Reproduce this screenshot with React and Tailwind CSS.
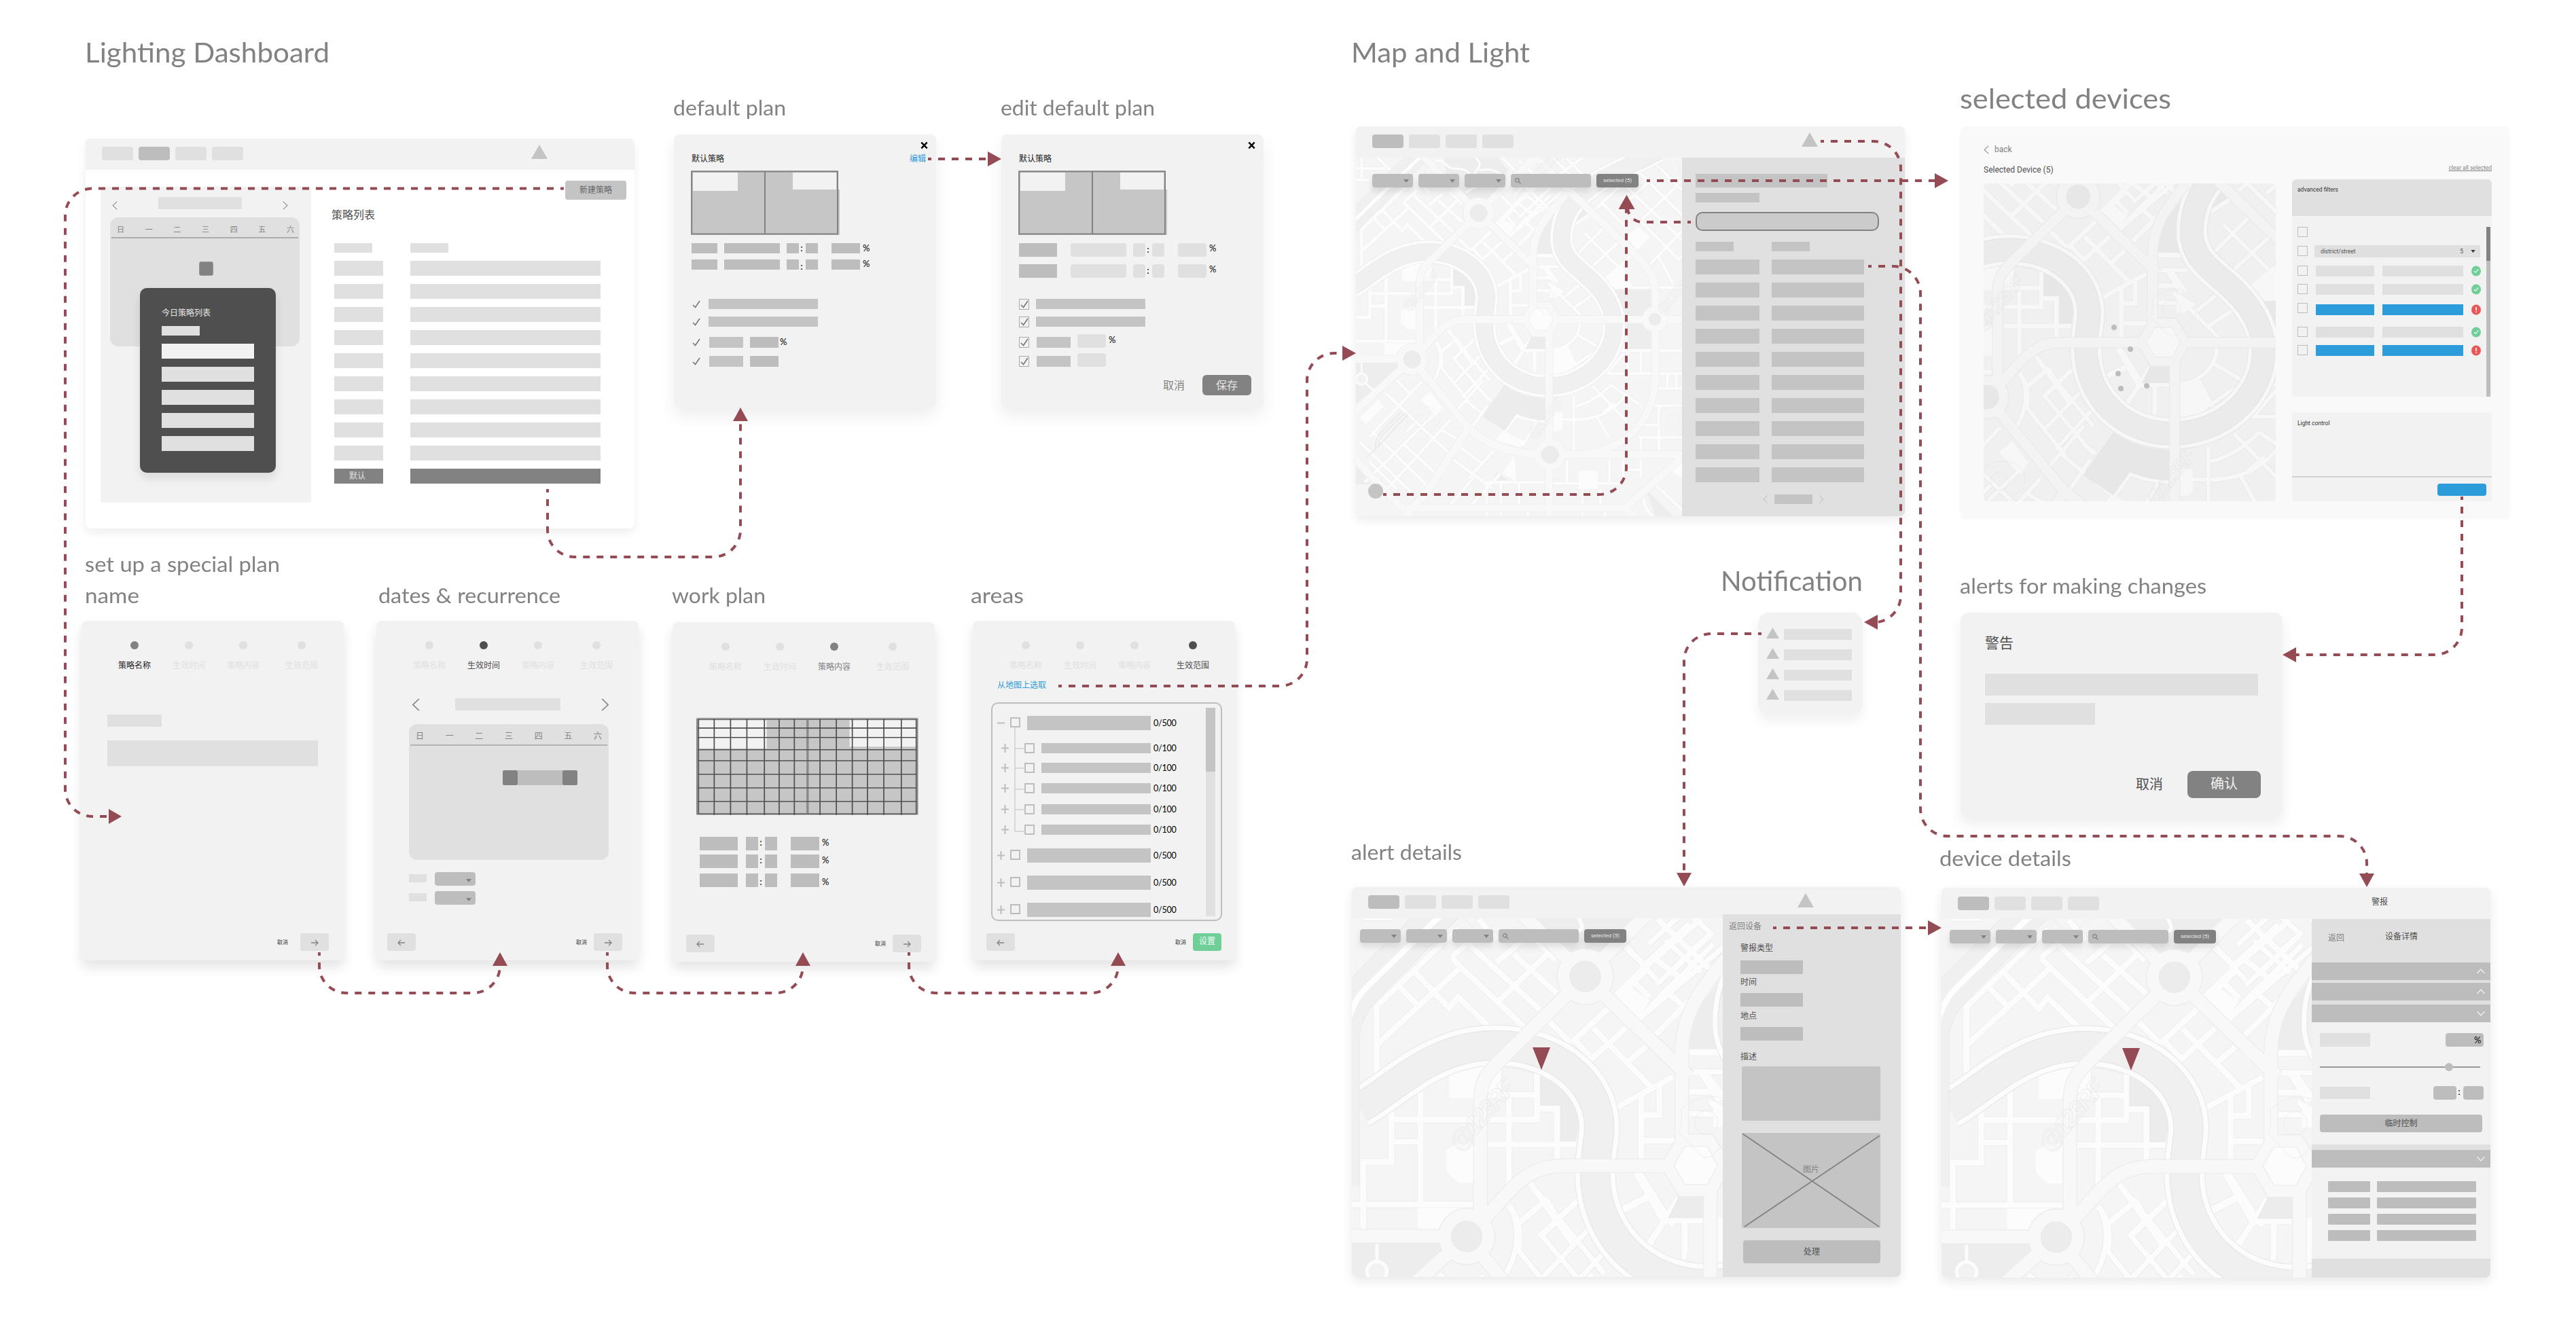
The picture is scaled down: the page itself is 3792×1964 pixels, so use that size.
import { useLayoutEffect, useRef } from "react";

const CJK = "font-['Noto_Sans','Noto_Sans_CJK_SC',sans-serif]";

/* Keeps a title at a fixed width by scaling its glyphs horizontally. */
function Fit({ width, className, children }) {
  const ref = useRef(null);
  useLayoutEffect(() => {
    const el = ref.current;
    const fit = () => {
      el.style.transform = "none";
      el.style.transform = `scaleX(${width / el.getBoundingClientRect().width})`;
    };
    fit();
    document.fonts?.ready.then(fit);
  }, [width]);
  return (
    <span ref={ref} className={`inline-block origin-left whitespace-nowrap ${className || ""}`}>
      {children}
    </span>
  );
}

const titles = [
  ["Lighting Dashboard", 360, "left-[125px] top-[52px] text-[41px]"],
  ["default plan", 166, "left-[991px] top-[140px] text-[31px]"],
  ["edit default plan", 227, "left-[1473px] top-[140px] text-[31px]"],
  ["set up a special plan", 287, "left-[125px] top-[812px] text-[31px]"],
  ["name", 80, "left-[125px] top-[858px] text-[31px]"],
  ["dates & recurrence", 268, "left-[557px] top-[858px] text-[31px]"],
  ["work plan", 138, "left-[989px] top-[858px] text-[31px]"],
  ["areas", 78, "left-[1429px] top-[858px] text-[31px]"],
  ["Map and Light", 263, "left-[1989px] top-[52px] text-[41px]"],
  ["selected devices", 311, "left-[2885px] top-[120px] text-[41px]"],
  ["Notification", 209, "left-[2533px] top-[830px] text-[41px]"],
  ["alerts for making changes", 363, "left-[2885px] top-[844px] text-[31px]"],
  ["alert details", 163, "left-[1989px] top-[1236px] text-[31px]"],
  ["device details", 194, "left-[2855px] top-[1245px] text-[31px]"],
];

function Triangle({ className }) {
  return (
    <svg viewBox="0 0 24 21" preserveAspectRatio="none" className={className}>
      <path d="M12 0 24 21H0Z" fill="#c4c4c4" />
    </svg>
  );
}

function Chevron({ d = "left", className }) {
  const paths = { left: "M9 1 1.5 9 9 17", right: "M1 1 8.5 9 1 17" };
  return (
    <svg viewBox="0 0 10 18" preserveAspectRatio="none" fill="none" stroke="currentColor" strokeWidth="1.4" className={className}>
      <path d={paths[d]} />
    </svg>
  );
}

function Caret({ className }) {
  return (
    <svg viewBox="0 0 8 5" className={className}>
      <path d="M0 0H8L4 5Z" fill="currentColor" />
    </svg>
  );
}

function Tabs({ active }) {
  return (
    <div className="flex gap-2">
      {[0, 1, 2, 3].map((i) => (
        <div key={i} className={`h-5 w-[46px] rounded ${i === active ? "bg-[#bdbdbd]" : "bg-[#e0e0e0]"}`} />
      ))}
    </div>
  );
}

function Weekdays({ className }) {
  return (
    <div className={`flex items-center justify-between leading-none text-[#828282] ${className}`}>
      {["日", "一", "二", "三", "四", "五", "六"].map((d) => (
        <span key={d}>{d}</span>
      ))}
    </div>
  );
}

/* ---------- dashboard ---------- */

function Dashboard() {
  return (
    <section className="absolute left-[126px] top-[204px] h-[574px] w-[808px] overflow-visible rounded-lg bg-white shadow-[0_6px_14px_rgba(0,0,0,0.07)]">
      <header className="flex h-[46px] items-start justify-between rounded-t-lg bg-[#f2f2f2] pl-6 pr-[128px] pt-3">
        <Tabs active={1} />
        <Triangle className="-mt-[3px] h-[21px] w-6" />
      </header>
      <div className="flex">
        <aside className="relative ml-[22px] mt-[25px] h-[465px] w-[310px] rounded bg-[#f2f2f2]">
          <div className="flex h-[45px] items-start justify-between px-[17px] pt-[15px] text-[#828282]">
            <Chevron className="mt-[6px] h-[13px] w-2" />
            <div className="h-[18px] w-[123px] bg-[#e0e0e0]" />
            <Chevron d="right" className="mr-[17px] mt-[6px] h-[13px] w-2" />
          </div>
          <div className="ml-[14px] flex h-[190px] w-[279px] flex-col items-center rounded-xl bg-[#e0e0e0]">
            <Weekdays className="h-[29px] w-full pl-[10px] pr-2 pt-[5px] text-[11px]" />
            <div className="h-[2px] w-[275px] bg-[#acacac]" />
            <div className="ml-[3px] mt-[34px] h-[21px] w-[21px] rounded-[3px] border border-[#999] bg-[#828282]" />
          </div>
          <div className="absolute left-[58px] top-[149px] flex h-[272px] w-[200px] flex-col rounded-[10px] bg-[#4f4f4f] px-8 pt-[30px] shadow-[0_8px_14px_rgba(0,0,0,0.1)]">
            <span className="h-[26px] text-xs leading-[14px] text-[#e6e6e6]">今日策略列表</span>
            <div className="h-[14px] w-14 bg-[#e0e0e0]" />
            <div className="mt-3 flex flex-col gap-3">
              {[0, 1, 2, 3, 4].map((i) => (
                <div key={i} className={`h-[22px] w-[136px] ${i ? "bg-[#e0e0e0]" : "bg-[#f2f2f2]"}`} />
              ))}
            </div>
          </div>
        </aside>
        <main className="flex flex-1 flex-col">
          <button className="mr-3 mt-4 h-7 w-[90px] self-end rounded bg-[#c4c4c4] text-xs text-[#666]">新建策略</button>
          <h2 className="ml-[30px] mt-[10px] h-6 text-base leading-6 text-[#4f4f4f]">策略列表</h2>
          <div className="ml-[34px] mt-[30px] grid grid-cols-[112px_280px] gap-y-3">
            <div className="h-[14px] w-14 bg-[#e0e0e0]" />
            <div className="h-[14px] w-14 bg-[#e0e0e0]" />
            {Array.from({ length: 9 }, (_, i) => [
              <div key={`a${i}`} className="h-[22px] w-[72px] bg-[#e0e0e0]" />,
              <div key={`b${i}`} className="h-[22px] bg-[#e0e0e0]" />,
            ])}
            <div className="flex h-[22px] w-[72px] items-center justify-center bg-[#828282] pr-1 text-xs text-[#e0e0e0]">默认</div>
            <div className="h-[22px] bg-[#828282]" />
          </div>
        </main>
      </div>
    </section>
  );
}

/* ---------- default plan ---------- */

function PlanChart() {
  return (
    <svg viewBox="0 0 219 95" className="block h-[95px] w-[219px]">
      <rect x="0" y="28" width="219" height="67" fill="#c6c6c6" />
      <rect x="0" y="0" width="217" height="40" fill="#c6c6c6" />
      <path d="M3 3H69V30H3ZM150 3H214V28H150Z" fill="#f2f2f2" />
      <path d="M109 2V93M1.2 1.5H216V93.5H1.2Z" fill="none" stroke="#828282" strokeWidth="2" />
    </svg>
  );
}

function Check({ boxed }) {
  return (
    <span className={boxed ? "flex h-4 w-[15px] items-center justify-center border border-[#aaa]" : "flex h-4 w-[14px] items-center"}>
      <svg viewBox="0 0 12 12" className="h-3 w-3">
        <path d="M1 7 4.5 10.5 11 1" fill="none" stroke="#777" strokeWidth="1.6" />
      </svg>
    </span>
  );
}

const Pct = ({ className = "" }) => (
  <span className={`w-[14px] font-[Lato,sans-serif] text-[13px] leading-none text-black ${className}`}>%</span>
);
const Colon = ({ className = "" }) => (
  <span className={`w-[10px] pr-[2px] text-center font-[Lato,sans-serif] text-[14px] leading-none text-black ${className}`}>:</span>
);

function PlanHead({ edit }) {
  return (
    <>
      <div className="flex h-[28px] justify-end pr-3 pt-[10px]">
        <svg viewBox="0 0 10 10" className="h-3 w-[11px]">
          <path d="M1.2 1 8.8 9M8.8 1 1.2 9" stroke="#000" strokeWidth="2.1" />
        </svg>
      </div>
      <div className="flex h-[25px] justify-between pl-[26px] pr-[15px] text-xs leading-4">
        <span className="text-[#222]">默认策略</span>
        {edit && <span className="text-[#2d9cdb]">编辑</span>}
      </div>
      <div className="ml-[25px]">
        <PlanChart />
      </div>
    </>
  );
}

function DefaultPlan() {
  return (
    <section className="absolute left-[992px] top-[198px] h-[402px] w-[386px] rounded-lg bg-[#f2f2f2] shadow-[0_12px_24px_rgba(0,0,0,0.07)]">
      <PlanHead edit />
      <div className="ml-[26px] mt-3 flex flex-col gap-[9px]">
        {[0, 1].map((i) => (
          <div key={i} className="flex h-[15px] items-center">
            <div className="h-full w-[38px] bg-[#bdbdbd]" />
            <div className="ml-[10px] h-full w-[82px] bg-[#bdbdbd]" />
            <div className="ml-[10px] h-full w-[18px] bg-[#bdbdbd]" />
            <Colon className={i ? "mt-1" : "-mt-px"} />
            <div className="h-full w-[18px] bg-[#bdbdbd]" />
            <div className="ml-5 mr-1 h-full w-[42px] bg-[#bdbdbd]" />
            <Pct className={i ? "-mt-[3px]" : ""} />
          </div>
        ))}
      </div>
      <div className="ml-[27px] mt-[43px] flex flex-col">
        <div className="flex h-[26px] gap-[10px]"><Check /><div className="h-[15px] w-[161px] bg-[#c4c4c4]" /></div>
        <div className="flex h-[30px] gap-[10px]"><Check /><div className="h-[15px] w-[161px] bg-[#c4c4c4]" /></div>
        <div className="flex h-[28px]"><Check /><div className="ml-[11px] h-4 w-[50px] bg-[#c4c4c4]" /><div className="ml-[10px] mr-[2px] h-4 w-[42px] bg-[#bdbdbd]" /><Pct className="mt-px" /></div>
        <div className="flex h-[28px]"><Check /><div className="ml-[11px] h-4 w-[50px] bg-[#c4c4c4]" /><div className="ml-[10px] h-4 w-[42px] bg-[#bdbdbd]" /></div>
      </div>
    </section>
  );
}

function EditPlan() {
  return (
    <section className="absolute left-[1474px] top-[198px] h-[402px] w-[386px] rounded-lg bg-[#f2f2f2] shadow-[0_12px_24px_rgba(0,0,0,0.07)]">
      <PlanHead />
      <div className="ml-[26px] mt-3 flex flex-col gap-[11px]">
        {[0, 1].map((i) => (
          <div key={i} className="flex h-5 items-center">
            <div className="h-5 w-14 bg-[#bdbdbd]" />
            <div className="ml-5 h-5 w-[82px] rounded bg-[#e0e0e0]" />
            <div className="ml-[10px] h-5 w-[18px] rounded bg-[#e0e0e0]" />
            <Colon className="-mt-[2px]" />
            <div className="h-5 w-[18px] rounded bg-[#e0e0e0]" />
            <div className="ml-5 mr-1 h-5 w-[42px] rounded bg-[#e0e0e0]" />
            <Pct className="-mt-[5px]" />
          </div>
        ))}
      </div>
      <div className="ml-[26px] mt-[31px] flex flex-col">
        <div className="flex h-[26px] gap-[10px]"><Check boxed /><div className="h-[15px] w-[161px] bg-[#c4c4c4]" /></div>
        <div className="flex h-[30px] gap-[10px]"><Check boxed /><div className="h-[15px] w-[161px] bg-[#c4c4c4]" /></div>
        <div className="flex h-[28px]"><Check boxed /><div className="ml-[11px] h-4 w-[50px] bg-[#c4c4c4]" /><div className="-mt-1 ml-[10px] mr-1 h-5 w-[42px] rounded bg-[#e0e0e0]" /><Pct className="-mt-[2px]" /></div>
        <div className="flex h-[28px]"><Check boxed /><div className="ml-[11px] h-4 w-[50px] bg-[#c4c4c4]" /><div className="-mt-1 ml-[10px] h-5 w-[42px] rounded bg-[#e0e0e0]" /></div>
      </div>
      <div className="mr-[18px] flex items-center justify-end gap-[26px] text-base leading-none">
        <span className="text-[#828282]">取消</span>
        <button className="h-[30px] w-[72px] rounded-md bg-[#828282] text-[#e6e6e6]">保存</button>
      </div>
    </section>
  );
}

/* ---------- special plan wizard ---------- */

const steps = ["策略名称", "生效时间", "策略内容", "生效范围"];
const stepPad = ["ml-[54px]", "ml-8", "ml-8", "ml-[38px]"];

function Steps({ active, dot, text }) {
  return (
    <div className="flex h-[74px] pt-[30px]">
      {steps.map((s, i) => (
        <div key={s} className={`flex w-12 flex-col items-center ${stepPad[i]}`}>
          <div className={`h-3 w-3 rounded-full ${i === active ? dot : "bg-[#e0e0e0]"}`} />
          <span className={`mt-4 whitespace-nowrap text-xs leading-4 ${i === active ? text : "text-[#e0e0e0]"}`}>{s}</span>
        </div>
      ))}
    </div>
  );
}

function ArrowButton({ left }) {
  return (
    <button className="flex h-[26px] w-[42px] items-center justify-center rounded bg-[#e0e0e0]">
      <svg viewBox="0 0 12 10" className={`mt-[2px] h-[10px] w-3 ${left ? "rotate-180" : ""}`} fill="none" stroke="#828282" strokeWidth="1.3">
        <path d="M1 5H11M7 1 11 5 7 9" />
      </svg>
    </button>
  );
}

function WizardCard({ place, active, dot, text, foot, children, next }) {
  return (
    <section className={`absolute flex h-[500px] w-[386px] flex-col rounded-lg bg-[#f2f2f2] shadow-[0_10px_18px_rgba(0,0,0,0.11)] ${place}`}>
      <Steps active={active} dot={dot} text={text} />
      <div className="flex-1">{children}</div>
      <footer className={`flex h-10 items-start ${foot}`}>
        {active > 0 && <ArrowButton left />}
        <span className="ml-auto mr-[10px] mt-[9px] text-[8px] leading-none text-[#333]">取消</span>
        {next || <ArrowButton />}
      </footer>
    </section>
  );
}

function NameStep() {
  return (
    <WizardCard place="left-[120px] top-[914px]" active={0} dot="bg-[#828282]" text="text-[#222]" foot="pl-4 pr-[22px] [&>span]:mr-[18px]">
      <div className="ml-[38px] pt-[64px]">
        <div className="h-[18px] w-20 bg-[#e0e0e0]" />
        <div className="mt-5 h-[38px] w-[310px] bg-[#e0e0e0]" />
      </div>
    </WizardCard>
  );
}

function DatesStep() {
  return (
    <WizardCard place="left-[554px] top-[914px]" active={1} dot="bg-[#4f4f4f]" text="text-[#4f4f4f]" foot="pl-4 pr-6">
      <div className="flex justify-between pl-[52px] pr-[43px] pt-10 text-[#828282]">
        <Chevron className="h-[19px] w-3" />
        <div className="mr-2 h-[18px] w-[155px] bg-[#e0e0e0]" />
        <Chevron d="right" className="h-[19px] w-3" />
      </div>
      <div className="ml-12 mt-[19px] flex h-[200px] w-[294px] flex-col items-center rounded-xl bg-[#e0e0e0]">
        <Weekdays className="h-[30px] w-full pl-[10px] pr-[10px] pt-[6px] text-xs" />
        <div className="h-[2px] w-[290px] bg-[#b4b4b4]" />
        <div className="ml-[138px] mt-9 flex h-[22px] w-[110px] justify-between self-start bg-[#bdbdbd]">
          <div className="w-[22px] rounded-[3px] bg-[#828282]" />
          <div className="w-[22px] rounded-[3px] bg-[#828282]" />
        </div>
      </div>
      <div className="ml-12 mt-[18px] flex flex-col gap-2">
        {[0, 1].map((i) => (
          <div key={i} className="flex items-start">
            <div className="mt-[3px] h-3 w-[26px] bg-[#e0e0e0]" />
            <div className="ml-3 flex h-5 w-[60px] items-center justify-end rounded bg-[#bdbdbd] pr-[6px] text-[#828282]">
              <Caret className="mt-1 h-[5px] w-2" />
            </div>
          </div>
        ))}
      </div>
    </WizardCard>
  );
}

function WorkGrid() {
  const xs = [160, 202, 244, 289, 327, 366, 432, 474, 515, 554, 596, 641];
  const ys = [568, 602, 646, 686, 735, 784, 833];
  return (
    <svg viewBox="114 529 571 353" preserveAspectRatio="none" className="block h-[144px] w-[327px]">
      <rect x="115" y="530" width="569" height="351" fill="#c6c6c6" />
      <path d="M120 540H295V641H120ZM508 540H678V635H508Z" fill="#f2f2f2" />
      <path d="M117 536H681V878H117ZM400 536V878" fill="none" stroke="#8a8a8a" strokeWidth="6" />
      <path d="M120 536H679V878H120Z" fill="none" stroke="#5b5b5b" strokeWidth="2.5" />
      {xs.map((x) => <path key={x} d={`M${x} 534V882`} stroke="#4f4f4f" strokeWidth="3" />)}
      {ys.map((y) => <path key={y} d={`M118 ${y}H680`} stroke="#4f4f4f" strokeWidth="4" />)}
    </svg>
  );
}

function WorkStep() {
  return (
    <WizardCard place="left-[990px] top-[916px]" active={2} dot="bg-[#828282]" text="text-[#828282]" foot="pl-5 pr-5">
      <div className="ml-[35px] pt-[66px]">
        <WorkGrid />
      </div>
      <div className="ml-10 mt-8 flex flex-col">
        {["mb-[6px]", "mb-2", ""].map((m, i) => (
          <div key={i} className={`flex h-5 items-center ${m}`}>
            <div className="h-5 w-14 bg-[#bdbdbd]" />
            <div className="ml-3 h-5 w-[18px] bg-[#bdbdbd]" />
            <Colon className={i === 2 ? "mt-1" : "-mt-1"} />
            <div className="h-5 w-[18px] bg-[#bdbdbd]" />
            <div className="ml-5 mr-1 h-5 w-[42px] bg-[#bdbdbd]" />
            <Pct className={i === 2 ? "mt-1" : "-mt-1"} />
          </div>
        ))}
      </div>
    </WizardCard>
  );
}

const PlusMinus = ({ minus }) => (
  <svg viewBox="0 0 11 13" className="h-[13px] w-[11px]" stroke="#bdbdbd" strokeWidth="2">
    <path d={minus ? "M0 6.5H11" : "M0 6.5H11M5.5 0V13"} />
  </svg>
);

const areaRows = [
  ["minus", "h-[40px]"],
  ["sub", "h-[29px]"],
  ["sub", "h-[30px]"],
  ["sub", "h-[31px]"],
  ["sub", "h-[30px]"],
  ["sub", "h-[35px]"],
  ["plus", "h-[40px]"],
  ["plus", "h-[40px]"],
  ["plus", "h-[24px]"],
];

function AreasStep() {
  return (
    <WizardCard
      place="left-[1432px] top-[914px]"
      active={3}
      dot="bg-[#4f4f4f]"
      text="text-[#4f4f4f]"
      foot="pl-5 pr-5"
      next={<button className="flex h-[26px] w-[42px] items-center justify-center rounded bg-[#6fcf97] pb-[2px] text-xs text-white/90">设置</button>}
    >
      <a className="ml-[36px] mt-[13px] block h-[33px] text-xs leading-4 text-[#2d9cdb]">从地图上选取</a>
      <div className="ml-[27px] flex h-[322px] w-[340px] justify-between overflow-hidden rounded-[10px] border-2 border-[#bdbdbd]">
        <div className="relative flex flex-col pt-[18px]">
          <svg viewBox="0 0 18 156" className="absolute left-8 top-[34px] h-[156px] w-[18px]" fill="none" stroke="#cfcfcf" strokeWidth="1.5">
            <path d="M1 0V154H16M1 32H16M1 61H16M1 92H16M1 122H16" />
          </svg>
          {areaRows.map(([kind, h], i) => {
            const sub = kind === "sub";
            return (
              <div key={i} className={`flex items-start ${h} ${sub ? "pl-[13px]" : "pl-[7px]"}`}>
                <span className={`flex items-center ${sub ? "h-[15px]" : "h-5"}`}><PlusMinus minus={kind === "minus"} /></span>
                <span className={`h-[15px] w-[15px] border-2 border-[#bdbdbd] bg-[#f2f2f2] ${sub ? "ml-[23px]" : "ml-2 mt-[2px]"}`} />
                <span className={`ml-[10px] bg-[#c4c4c4] ${sub ? "h-[15px] w-[161px]" : "h-[21px] w-[182px]"}`} />
                <span className={`ml-1 font-[Lato,sans-serif] text-[12.5px] leading-none tracking-[-0.2px] text-black ${sub ? "mt-[2px]" : "mt-[5px]"}`}>{sub ? "0/100" : "0/500"}</span>
              </div>
            );
          })}
        </div>
        <div className="mr-2 mt-[6px] h-[307px] w-[14px] bg-[#e0e0e0]">
          <div className="h-[94px] bg-[#c4c4c4]" />
        </div>
      </div>
    </WizardCard>
  );
}

/* ---------- map drawing ---------- */

const mainRoads = [
  "M282 870V590C282 540 298 522 330 490L542 281",
  "M542 281 800 530",
  "M782 700V470C782 370 830 300 945 180",
  "M800 40 945 190",
  "M935 175 1240 470C1300 530 1322 580 1322 640V1000C1322 1190 1190 1348 960 1348",
  "M255 915C350 840 370 751 490 751H1500",
  "M248 927 480 1210C560 1300 680 1348 857 1348H1500",
  "M-60 926H248",
  "M248 927-60 1205",
  "M853 810V1640",
  "M500 1225 300 1530 230 1600",
  "M542 281 380 120 290 20",
  "M542 281 800 20",
  "M-60 1310 260 1640",
  "M220 1584H1190L1450 1350M1190 1584 1240 1640",
];

/* Side streets of the north-west district, drawn at close-up scale. */
const closeStreets =
  "M110 540V850M110 715 485 368M440 328 480 370 765 640M440 328 540 240 M505 260 830 560M640 350 745 262M715 315 905 487M650 520 872 305M272 388 430 552 470 503 620 650M205 452 290 540M110 545 205 452 272 388 470 200M560 160 640 250M800 240 900 340" +
  "M1200 275 1290 360M1165 500 1290 375 1540 160M1340 335 1465 430M1350 160 1580 380M1400 400 1580 230M1380 470 1470 550M1250 440 1315 505M1270 600 1400 460 1460 410 1540 320M1340 670 1570 440M1500 300 1580 230" +
  "M870 610 965 705M970 705 1130 555M1065 640 1320 900M1050 785 1210 640M1220 790 1300 720M990 700 1060 775M1170 990 1420 855M1278 940V1220M1358 895V1025H1290M1290 1138H1425M1480 748H1650M1480 835H1560L1650 960M1480 922H1600M1480 1020H1600" +
  "M303 900V1430M175 1010V1232H50V1540M180 1045H535M185 1143H300M-10 1420H535M600 935H815M817 830V1045H600M830 997H906V1220M600 1155H990M693 940V1340" +
  "M692 1425Q755 1500 735 1620M790 1330 980 1600M740 1500 865 1395M830 1560 1005 1395M1190 1450 1315 1385M1255 1280 1385 1510M1442 1390 1250 1700M1390 1490H1560M1470 1500V1640M860 1400 910 1490";

/* Remaining side streets. */
const outerStreets =
  "M-10 84H130M25 20V130M-10 135H60M80 20 165 105M1010 370 1175 535M975 465 1090 350M1040 520 1160 410M1125 570 1212 470M1060 262 1200 130 1340 36M1080 230 1190 340M1180 150 1440 400M1240 90 1440 290M1300 40 1440 180M1240 330 1450 130M1300 505 1450 350M1335 470 1400 590M1150 270 1300 140M1420 490 1450 460M1260 320 1420 480M970 330 1030 290" +
  "M1150 610H1450M1170 888H1450M1100 990H1450M1375 990V1060M1415 990V1060M1310 1055H1450M1258 890V985M1110 985 1185 900M1200 890V990" +
  "M1285 1132H1450M1338 1132V1330M1220 1217H1335M1258 1270V1330M1250 1272H1450" +
  "M962 1090V1330M970 1135Q1060 1110 1125 1040M865 1185Q1090 1225 1190 1085M1045 1045 1195 1200M1065 1180 1115 1270M1125 1040 1250 1125M1090 1165 1140 1120" +
  "M990 765Q985 860 870 890M980 820 1065 870M930 870 970 950 1045 900M970 950 990 975M850 590 1000 740M910 660 985 600M960 700 1050 640M825 515 875 590M800 518H895M800 468H870" +
  "M630 860 700 825M675 765 760 900M780 830 695 950M750 885H840M788 890V985" +
  "M355 850Q395 930 345 1020M375 960 500 1115M430 920 590 1110M405 795 590 1020M440 920 500 860M430 1035 550 910M470 1095 590 965M445 1155 560 1020M515 1225 580 1130M480 1105 660 1250M655 1250 710 1175Q770 1200 840 1200M735 1310 800 1205M620 1285 655 1245M560 1080 600 1110" +
  "M130 1075 420 1350M180 1020 240 1080M290 1025 60 1270M350 1165 40 1470M420 1190 110 1530M15 1290 240 1510M70 1245 330 1500M380 1240 450 1280M60 1380 180 1500M210 1300 350 1430M220 1250 260 1210" +
  "M430 1370 600 1495M610 1330 500 1450M440 1300 560 1390M575 1470H840M577 1470V1640M640 1470V1570M720 1470V1570M870 1475H1180M932 1370V1475M1120 1370V1475M1180 1370V1475M1258 1370V1450M1180 1415H1258M1000 1500V1570M1080 1500V1570M500 1580 640 1430M1230 1560 1400 1400M1310 1470 1450 1600M1275 1490Q1250 1590 1340 1640M390 1600 520 1450M640 1600V1640M760 1600V1640M1000 1600V1640M1100 1600V1640" +
  "M630 20 720 110M850 20 990 150M900 110 1020 20M930 40 1010 120M700 200 830 80M720 50 850 170M830 20 700 140M640 200 720 290M680 260 800 150M720 300 860 170M740 190 830 270M770 290 860 200M640 320 700 260M660 400 930 170";

const watermarks = ["translate(232 720) rotate(-49)", "translate(790 1285) rotate(-52)", "translate(1355 735) rotate(-50)", "translate(815 125) rotate(-45)"];

function CityMap({ view, className }) {
  return (
    <svg viewBox={view} preserveAspectRatio="none" className={className}>
      <rect x="-100" y="0" width="1700" height="1700" fill="#f5f5f5" />
      <g fill="#ededed">
        <path d="M385 20H615L670 90 655 165 590 218H490L400 110ZM795 465 800 390 890 270 860 380 870 465ZM950 225 1035 290 985 330 960 310ZM1140 618H1310V885H1205L1195 740ZM-60 940H190L205 970-60 1200ZM-60 1330-20 1370 70 1480-60 1480ZM600 1465 620 1425 680 1465ZM1280 1500 1420 1640H1330Z" />
      </g>
      <g fill="none" stroke="#ededed" strokeWidth="17">
        <path d={outerStreets} />
      </g>
      <g transform="translate(-37.3 48.7) scale(.5624)" fill="none">
        <path d={closeStreets} stroke="#ededed" strokeWidth="31" />
      </g>
      <g fill="none" stroke="#fcfcfc" strokeWidth="13">
        <path d={outerStreets} />
      </g>
      <g transform="translate(-37.3 48.7) scale(.5624)" fill="none">
        <path d={closeStreets} stroke="#fcfcfc" strokeWidth="26" />
      </g>
      <g transform="translate(-37.3 48.7) scale(.5624)">
        <path d="M430 850 560 790H665V950H430ZM418 1180 470 1150H540V1325H470L418 1275ZM290 1435H540L400 1527H290ZM1165 495 1215 450 1315 520 1265 595Z" fill="#fcfcfc" />
        <path d="M662 815 730 820 802 840V920H662Z" fill="#f5f5f5" stroke="#ededed" strokeWidth="3" />
      </g>
      <g fill="#fcfcfc">
        <path d="M1195 380 1245 340 1298 388 1240 445ZM1095 570 1170 505 1220 605 1145 618ZM287 1105 330 1070 382 1140 355 1178ZM18 1185 100 1105 125 1135 45 1212ZM620 1285 655 1245 745 1290 725 1315ZM645 1430 700 1355 707 1465ZM983 1420H1068V1500H983ZM868 880 935 868 972 950 930 990 868 1005ZM868 1160H912V1230L895 1245H868ZM1375 1410 1440 1370V1450ZM860 590 918 628 885 655H860ZM310 60 330 42 370 75 345 100Z" />
      </g>
      <path d="M655 1043Q740 1100 840 1100V1195Q770 1195 708 1168L655 1243 560 1178ZM775 828H840V880H750Z" fill="#ececec" stroke="#e8e8e8" strokeWidth="2" />
      <path d="M432 530Q520 570 525 650L518 688H482V600H432Z" fill="#ececec" stroke="#e8e8e8" strokeWidth="2" />
      {["M-17 607C70 560 160 452 320 452C470 452 577 545 577 655C577 690 567 720 567 770C567 930 690 1045 845 1045C1010 1045 1140 920 1140 780C1140 690 1090 620 1020 560C960 510 908 470 908 395C908 300 950 220 1060 150C1150 90 1250 60 1330 10"].map((d) => (
        <g key={d} fill="none">
          <path d={d} stroke="#e9e9e9" strokeWidth="103" />
          <path d={d} stroke="#fcfcfc" strokeWidth="99" />
          <path d={d} stroke="#e6e6e6" strokeWidth="75" />
          <path d={d} stroke="#f0f0f0" strokeWidth="71" />
        </g>
      ))}
      <g fill="none">
        <path d="M-60 800V440C-60 370-20 325 19 285L300 4" stroke="#e8e8e8" strokeWidth="84" />
        <path d="M-60 800V440C-60 370-20 325 19 285L300 4" stroke="#f0f0f0" strokeWidth="81" />
        <path d="M-50 400C-30 340-20 325 10 297L176 136 300 20" stroke="#fefefe" strokeWidth="14" />
      </g>
      <path d="M350 50C400 40 390 85 440 85S500 100 510 120M510 20C560 60 550 75 530 95C500 130 560 160 520 170L485 190M545 92Q600 80 640 110" fill="none" stroke="#fcfcfc" strokeWidth="9" />
      <g fill="none" stroke="#ececec" strokeWidth="36">
        {mainRoads.map((d) => <path key={d} d={d} />)}
      </g>
      <g fill="#f8f8f8" stroke="#ececec" strokeWidth="2.5">
        <circle cx="542" cy="281" r="70" />
        <circle cx="248" cy="927" r="70" />
        <circle cx="857" cy="1348" r="70" />
        <circle cx="1320" cy="750" r="58" />
        <path d="M738 735 775 672H858L897 735V766L863 828H775L738 766Z" />
      </g>
      <g fill="none" stroke="#f8f8f8" strokeWidth="32">
        {mainRoads.map((d) => <path key={d} d={d} />)}
      </g>
      <g fill="#ececec" stroke="#e6e6e6" strokeWidth="1.5">
        <circle cx="542" cy="281" r="38" />
        <circle cx="248" cy="927" r="38" />
        <circle cx="857" cy="1348" r="38" />
        <circle cx="1320" cy="750" r="27" />
      </g>
      <path d="M762 750 790 703H845L871 750 845 798H790Z" fill="#fcfcfc" stroke="#ececec" strokeWidth="2" />
      <g fill="none" stroke="#fcfcfc" strokeWidth="8">
        <path d="M25 946V985M45 1035 85 1072" />
        <circle cx="25" cy="1014" r="25" fill="#f2f2f2" />
      </g>
      <path d="M88 1325C82 1270 95 1262 205 1155M102 1310C95 1275 112 1265 218 1163M45 1362C130 1290 110 1290 230 1172" fill="none" stroke="#ebebeb" strokeWidth="6" />
      <g fill="none" stroke="#ebebeb" strokeWidth="1.5">
        {["", "translate(-555 555)", "translate(560 555)", "translate(560 -560)", "translate(-560 -560)"].map((t) => (
          <g key={t} transform={t}>
            <path d="M780 610Q840 560 900 590Q940 620 920 660L860 725Q835 740 820 715L775 670Q785 650 780 610Z" />
            <circle cx="843" cy="644" r="29" />
          </g>
        ))}
        {watermarks.map((t) => (
          <text key={t} transform={t} fontSize="62" fontWeight="700" fontStyle="italic" fontFamily="Liberation Sans, sans-serif" textLength="215">
            @123RF
          </text>
        ))}
      </g>
    </svg>
  );
}

function MapFilters({ className }) {
  return (
    <div className={`absolute flex gap-2 ${className}`}>
      {[0, 1, 2].map((i) => (
        <div key={i} className="flex h-5 w-[60px] items-center justify-end rounded bg-[#bdbdbd] pr-[6px] text-[#828282] shadow-[0_6px_10px_rgba(0,0,0,0.1)]">
          <Caret className="h-[5px] w-2" />
        </div>
      ))}
      <div className="flex h-5 w-[118px] items-center rounded bg-[#bdbdbd] pl-[6px] shadow-[0_6px_10px_rgba(0,0,0,0.1)]">
        <svg viewBox="0 0 9 9" className="h-[9px] w-[9px]" fill="none" stroke="#828282" strokeWidth="1.2">
          <circle cx="3.4" cy="3.4" r="2.7" />
          <path d="M5.4 5.4 8.5 8.5" />
        </svg>
      </div>
      <div className="flex h-5 w-[62px] items-center justify-center rounded bg-[#828282] pb-px font-[Roboto,sans-serif] text-[8px] text-[#e8e8e8] shadow-[0_6px_10px_rgba(0,0,0,0.1)]">
        selected (5)
      </div>
    </div>
  );
}

/* ---------- map screens ---------- */

function MapScreen() {
  return (
    <section className="absolute left-[1996px] top-[186px] h-[574px] w-[808px] overflow-visible rounded-lg bg-[#f2f2f2] shadow-[0_6px_14px_rgba(0,0,0,0.08)]">
      <header className="flex h-[46px] items-start justify-between pl-6 pr-[128px] pt-3">
        <Tabs active={0} />
        <Triangle className="-mt-[3px] h-[21px] w-6" />
      </header>
      <div className="relative flex h-[528px] overflow-hidden rounded-b-lg">
        <CityMap view="0 36 1440 1584" className="h-[528px] w-[480px]" />
        <MapFilters className="left-6 top-6" />
        <div className="absolute left-[18px] top-[480px] h-[22px] w-[22px] rounded-full bg-[#c4c4c4]" />
        <aside className="flex flex-1 flex-col bg-[#e0e0e0] pl-5 pt-6">
          <div className="h-5 w-[194px] bg-[#c4c4c4]" />
          <div className="mt-2 h-[14px] w-[94px] bg-[#c4c4c4]" />
          <div className="mt-[14px] h-7 w-[270px] rounded-[10px] border-2 border-[#828282] bg-[#cbcbcb]" />
          <div className="mt-4 grid grid-cols-[112px_136px] gap-y-3">
            <div className="h-[14px] w-14 bg-[#c4c4c4]" />
            <div className="h-[14px] w-14 bg-[#c4c4c4]" />
            {Array.from({ length: 10 }, (_, i) => [
              <div key={`a${i}`} className="h-[22px] w-[94px] bg-[#c4c4c4]" />,
              <div key={`b${i}`} className="h-[22px] bg-[#c4c4c4]" />,
            ])}
          </div>
          <div className="ml-[99px] mt-[18px] flex items-center gap-[10px] text-[#b4b4b4]">
            <Chevron className="h-3 w-[7px]" />
            <div className="h-[14px] w-14 bg-[#c4c4c4]" />
            <Chevron d="right" className="h-3 w-[7px]" />
          </div>
        </aside>
      </div>
    </section>
  );
}

const StatusIcon = ({ ok }) => (
  <svg viewBox="0 0 14 16" className="h-4 w-[14px]">
    <ellipse cx="7" cy="8" rx="7" ry="7.5" fill={ok ? "#6fcf97" : "#eb5757"} />
    <path d={ok ? "M3.8 8 6.2 10.3 10.4 5.4" : "M7 4V9M7 10.5V12"} fill="none" stroke="#fff" strokeWidth={ok ? 1.1 : 1.6} />
  </svg>
);

const deviceRows = [
  [true, "h-[27px]"],
  [true, "h-[30px]"],
  [false, "h-[33px]"],
  [true, "h-[27px]"],
  [false, "h-[20px]"],
];

function SelectedDevices() {
  return (
    <section className="absolute left-[2886px] top-[186px] flex h-[574px] w-[808px] justify-between rounded-lg bg-[#f9f9f9] pl-[34px] pr-[26px] font-[Roboto,sans-serif] shadow-[0_4px_6px_rgba(0,0,0,0.04)]">
      <div>
        <div className="flex items-center gap-2 pt-[26px] text-[#828282]">
          <Chevron className="h-[13px] w-2" />
          <span className="text-xs leading-4">back</span>
        </div>
        <h2 className="mt-[14px] text-xs leading-4 text-[#4f4f4f]">Selected Device (5)</h2>
        <div className="relative mt-3 h-[468px] w-[430px] overflow-hidden rounded-md brightness-[.98]">
          <CityMap view="237 238 942 1025" className="h-full w-full" />
          <svg viewBox="2920 270 430 468" className="absolute inset-0 h-full w-full" fill="#c0c0c0">
            <circle cx="3112" cy="482" r="4" />
            <circle cx="3136" cy="514" r="4" />
            <circle cx="3118" cy="550" r="4" />
            <circle cx="3122" cy="572" r="4" />
            <circle cx="3160" cy="568" r="4" />
          </svg>
        </div>
      </div>
      <div className="flex w-[294px] flex-col pt-[55px]">
        <a className="self-end text-[8.5px] leading-[13px] text-[#828282] underline">clear all selected</a>
        <div className="mt-[10px] h-[54px] rounded-t-md bg-[#e0e0e0] pl-2 pt-[10px] text-[8.5px] leading-[11px] text-[#333]">advanced filters</div>
        <div className="flex h-[266px] justify-between rounded-b bg-[#f2f2f2] pl-2 pr-[2px] pt-4">
          <div>
            <div className="h-[15px] w-[15px] border border-[#bdbdbd]" />
            <div className="mt-3 flex h-[30px] items-start gap-[10px]">
              <div className="mt-px h-[15px] w-[15px] border border-[#bdbdbd]" />
              <div className="flex h-[18px] w-[244px] items-center bg-[#e0e0e0] pl-[9px] pr-[7px] text-[8.5px] text-[#4f4f4f]">
                <span>district/street</span>
                <span className="ml-auto mr-[11px]">5</span>
                <Caret className="h-1 w-[7px] text-[#333]" />
              </div>
            </div>
            {deviceRows.map(([ok, h], i) => (
              <div key={i} className={`flex items-start ${h}`}>
                <div className={`h-[15px] w-[15px] border border-[#bdbdbd] ${i === 2 ? "-mt-[2px]" : ""}`} />
                <div className={`ml-3 h-4 w-[86px] ${ok ? "bg-[#e0e0e0]" : "bg-[#2d9cdb]"}`} />
                <div className={`ml-3 mr-3 h-4 w-[119px] ${ok ? "bg-[#e0e0e0]" : "bg-[#2d9cdb]"}`} />
                <StatusIcon ok={ok} />
              </div>
            ))}
          </div>
          <div className="h-[250px] w-[6px] bg-[#bdbdbd]">
            <div className="h-[50px] bg-[#828282]" />
          </div>
        </div>
        <div className="mt-[23px] flex h-[131px] flex-col rounded bg-[#f2f2f2]">
          <span className="h-[94px] pl-2 pt-[11px] text-[8.5px] leading-[11px] text-[#333]">Light control</span>
          <div className="h-[2px] bg-[#d2d2d2]" />
          <button className="mr-2 mt-[9px] h-[18px] w-[72px] self-end rounded bg-[#2d9cdb]" />
        </div>
      </div>
    </section>
  );
}

function Notification() {
  return (
    <section className="absolute left-[2588px] top-[902px] flex h-[150px] w-[154px] flex-col gap-[14px] rounded-2xl bg-[#f2f2f2] pl-3 pt-[23px] shadow-[0_10px_18px_rgba(0,0,0,0.06)]">
      {[0, 1, 2, 3].map((i) => (
        <div key={i} className="flex h-4 gap-[7px]">
          <Triangle className="-mt-px h-4 w-[19px]" />
          <div className="mt-px h-4 w-[100px] shrink-0 bg-[#e0e0e0]" />
        </div>
      ))}
    </section>
  );
}

function AlertDialog() {
  return (
    <section className="absolute left-[2886px] top-[902px] flex h-[301px] w-[474px] flex-col rounded-xl bg-[#f2f2f2] px-9 pt-[34px] shadow-[0_10px_20px_rgba(0,0,0,0.07)]">
      <h2 className="text-[21px] leading-5 text-[#4f4f4f]">警告</h2>
      <div className="mt-9 h-8 bg-[#e0e0e0]" />
      <div className="mt-[11px] h-8 w-[162px] bg-[#e0e0e0]" />
      <div className="-mr-1 mt-[68px] flex items-center justify-end gap-9 text-[20px] leading-none">
        <span className="text-[#4f4f4f]">取消</span>
        <button className="h-10 w-[108px] rounded-lg bg-[#828282] pb-[2px] text-[#f2f2f2]">确认</button>
      </div>
    </section>
  );
}

function MapPin() {
  return (
    <svg viewBox="0 0 26 33" className="absolute left-[266px] top-[190px] h-[33px] w-[26px]">
      <path d="M0 0H26L13 33Z" fill="#944b54" />
    </svg>
  );
}

function AlertDetails() {
  return (
    <section className="absolute left-[1990px] top-[1306px] h-[574px] w-[808px] rounded-lg bg-[#f2f2f2] shadow-[0_6px_16px_rgba(0,0,0,0.09)]">
      <header className="flex h-[46px] items-start justify-between pl-6 pr-[128px] pt-3">
        <Tabs active={0} />
        <Triangle className="-mt-[3px] h-[21px] w-6" />
      </header>
      <div className="relative flex h-[528px]">
        <CityMap view="-37.3 136.4 921 891" className="h-[528px] w-[546px] rounded-bl-lg" />
        <MapFilters className="left-3 top-4" />
        <MapPin />
        <aside className="-mt-[6px] flex h-[534px] flex-1 flex-col rounded-br-lg bg-[#e0e0e0] pl-[26px] pt-[10px] text-xs leading-4 text-[#4f4f4f]">
          <span className="-ml-[17px] text-[#828282]">返回设备</span>
          <span className="mt-4">警报类型</span>
          <div className="mt-[10px] h-5 w-[92px] bg-[#bdbdbd]" />
          <span className="mt-1">时间</span>
          <div className="mt-2 h-5 w-[92px] bg-[#bdbdbd]" />
          <span className="mt-[6px]">地点</span>
          <div className="mt-2 h-5 w-[92px] bg-[#bdbdbd]" />
          <span className="mt-4">描述</span>
          <div className="ml-[2px] mt-[6px] h-20 w-[204px] rounded-[2px] bg-[#c4c4c4]" />
          <div className="relative ml-[2px] mt-[18px] flex h-[140px] w-[204px] justify-center rounded-[2px] bg-[#c4c4c4] pt-[46px] text-[#828282]">
            <svg viewBox="0 0 204 140" className="absolute inset-0" stroke="#828282" strokeWidth="1.8">
              <path d="M1 1 202 138M203 4 4 138" />
            </svg>
            图片
          </div>
          <button className="ml-1 mt-[18px] h-[34px] w-[202px] rounded bg-[#bdbdbd]">处理</button>
        </aside>
      </div>
    </section>
  );
}

function Accordion({ down, className = "" }) {
  return (
    <div className={`flex h-[26px] items-center justify-end bg-[#bdbdbd] pr-2 ${className}`}>
      <svg viewBox="0 0 12 8" className="h-2 w-3" fill="none" stroke="#f2f2f2" strokeWidth="1.2">
        <path d={down ? "M.5 1 6 7 11.5 1" : "M.5 7 6 1 11.5 7"} />
      </svg>
    </div>
  );
}

function DeviceDetails() {
  return (
    <section className="absolute left-[2858px] top-[1307px] h-[574px] w-[808px] rounded-lg bg-[#f2f2f2] shadow-[0_6px_16px_rgba(0,0,0,0.09)]">
      <header className="flex h-[46px] items-start justify-between pl-6 pr-[151px] pt-[13px]">
        <Tabs active={0} />
        <span className="text-xs leading-4 text-[#4f4f4f]">警报</span>
      </header>
      <div className="relative flex h-[528px]">
        <CityMap view="-37.3 136.4 921 891" className="h-[528px] w-[547px] rounded-bl-lg" />
        <MapFilters className="left-3 top-4" />
        <MapPin />
        <aside className="flex flex-1 flex-col rounded-br-lg bg-[#e0e0e0] text-xs text-[#4f4f4f]">
          <div className="flex h-[64px] gap-[60px] pl-6 pt-[18px] leading-4">
            <span className="pt-[2px] text-[#828282]">返回</span>
            <span>设备详情</span>
          </div>
          <Accordion />
          <Accordion className="mt-1" />
          <Accordion down className="mt-[6px]" />
          <div className="h-[180px] bg-[#f2f2f2] px-3 pt-4">
            <div className="flex justify-between">
              <div className="h-5 w-[74px] bg-[#e0e0e0]" />
              <div className="-mr-[2px] flex h-5 w-14 items-center justify-end rounded bg-[#bdbdbd]"><Pct /></div>
            </div>
            <div className="mt-6 flex h-3 w-[236px] items-center">
              <div className="h-[2px] w-[184px] bg-[#999]" />
              <div className="h-3 w-3 rounded-full bg-[#bdbdbd]" />
              <div className="h-[2px] flex-1 bg-[#999]" />
            </div>
            <div className="mt-[22px] flex items-center">
              <div className="h-[18px] w-[74px] bg-[#e0e0e0]" />
              <div className="ml-auto h-5 w-[34px] rounded bg-[#bdbdbd]" />
              <Colon className="-mt-1" />
              <div className="-mr-[2px] h-5 w-[30px] rounded bg-[#bdbdbd]" />
            </div>
            <button className="mt-[22px] h-[26px] w-[239px] rounded bg-[#bdbdbd] leading-none">临时控制</button>
          </div>
          <Accordion down className="mt-2" />
          <div className="flex h-[134px] flex-col gap-2 bg-[#f2f2f2] pl-6 pt-5">
            {[0, 1, 2, 3].map((i) => (
              <div key={i} className="flex gap-[10px]">
                <div className="h-4 w-[62px] rounded-[1px] bg-[#bdbdbd]" />
                <div className="h-4 w-[146px] rounded-[1px] bg-[#bdbdbd]" />
              </div>
            ))}
          </div>
        </aside>
      </div>
    </section>
  );
}

/* ---------- flow connectors ---------- */

const flows = [
  "M830 277.5H136A40 40 0 0 0 96 317.5V1162A40 40 0 0 0 136 1202H160",
  "M806 720V780A40 40 0 0 0 846 820H1050A40 40 0 0 0 1090 780V618",
  "M1366 234H1455",
  "M470 1402V1422A40 40 0 0 0 510 1462H696A40 40 0 0 0 736 1422V1420",
  "M894 1402V1422A40 40 0 0 0 934 1462H1142A40 40 0 0 0 1182 1422V1420",
  "M1338 1402V1422A40 40 0 0 0 1378 1462H1606A40 40 0 0 0 1646 1422V1420",
  "M1558 1010H1884A40 40 0 0 0 1924 970V560A40 40 0 0 1 1964 520H1977",
  "M2036 728H2354A40 40 0 0 0 2394 688V307",
  "M2489 327H2416A22 22 0 0 1 2396 307",
  "M2424 266H2850",
  "M2680 208H2758A40 40 0 0 1 2798 248V876A40 40 0 0 1 2764 916",
  "M2750 392H2787A40 40 0 0 1 2827 432V1191A40 40 0 0 0 2867 1231H3444A40 40 0 0 1 3484 1271V1287",
  "M3624 731V924A40 40 0 0 1 3584 964H3379",
  "M2593 933H2519A40 40 0 0 0 2479 973V1286",
  "M2610 1366H2839",
];

const heads =
  "M179 1202 160 1191V1213ZM1090 600 1079 620H1101ZM1474 234 1454 223V245ZM736 1402 725 1422H747ZM1182 1402 1171 1422H1193ZM1646 1402 1635 1422H1657ZM1996 520 1976 509V531ZM2394.500 287 2382.500 308H2406.500ZM2868 266 2848 255V277ZM2744 916 2764 905V927ZM3484 1306 3473 1286H3495ZM3360 964 3380 953V975ZM2479 1305 2468 1285H2490ZM2858 1366 2838 1355V1377Z";

export default function App() {
  return (
    <div className={`relative h-[1964px] w-[3792px] overflow-hidden bg-white ${CJK}`}>
      {titles.map(([text, width, place]) => (
        <h1 key={text} className={`absolute font-[Lato,sans-serif] leading-[1.2] text-[#828282] ${place}`}>
          <Fit width={width}>{text}</Fit>
        </h1>
      ))}
      <Dashboard />
      <DefaultPlan />
      <EditPlan />
      <NameStep />
      <DatesStep />
      <WorkStep />
      <AreasStep />
      <MapScreen />
      <SelectedDevices />
      <Notification />
      <AlertDialog />
      <AlertDetails />
      <DeviceDetails />
      <svg viewBox="0 0 3792 1964" className="pointer-events-none absolute inset-0 h-[1964px] w-[3792px]">
        <g fill="none" stroke="#944b54" strokeWidth="4" strokeDasharray="10 10" strokeDashoffset="5">
          {flows.map((d) => <path key={d} d={d} />)}
        </g>
        <path d={heads} fill="#944b54" />
      </svg>
    </div>
  );
}
